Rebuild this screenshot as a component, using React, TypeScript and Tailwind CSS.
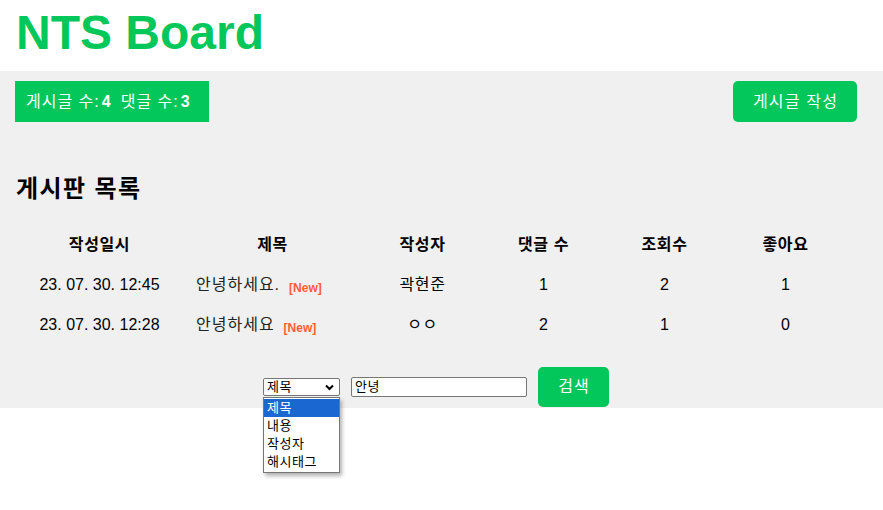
import React from "react";

const rows = [
  { date: "23. 07. 30. 12:45", title: "안녕하세요.", author: "곽현준", comments: 1, views: 2, likes: 1 },
  { date: "23. 07. 30. 12:28", title: "안녕하세요", author: "ㅇㅇ", comments: 2, views: 1, likes: 0 },
];

const headers = ["작성일시", "제목", "작성자", "댓글 수", "조회수", "좋아요"];

export default function App() {
  return (
    <div
      className="min-h-[510px] bg-white text-black"
      style={{ fontFamily: '"Liberation Sans", "Noto Sans CJK KR", Arial, sans-serif' }}
    >
      <h1 className="h-[71px] pl-4 pt-[5px] text-[48px] font-bold leading-[56px] text-[#03c75a]">
        NTS Board
      </h1>

      <div className="bg-[#f0f0f0] pb-px">
        <div className="flex items-start justify-between pl-[15px] pr-[26px] pt-[10px]">
          <div className="flex h-[41px] w-[194px] items-center bg-[#03c75a] pl-[11px] text-[16px] leading-5 text-white">
            <span className="tracking-[1px]">게시글 수:</span>
            <b className="ml-[2px]">4</b>
            <span className="ml-[10px] tracking-[1px]">댓글 수:</span>
            <b className="ml-[2px]">3</b>
          </div>
          <button className="h-[41px] w-[124px] rounded-[5px] bg-[#03c75a] pl-[1px] text-[16px] leading-5 tracking-[1.2px] text-white">
            게시글 작성
          </button>
        </div>

        <h2 className="ml-4 mt-[51px] text-[24px] font-bold leading-8 tracking-[1.4px]">게시판 목록</h2>

        <div className="ml-4 mt-5 grid grid-cols-[167px_179px_121px_121px_121px_121px] text-[16px]">
          {headers.map((h) => (
            <div key={h} className="flex h-10 items-center justify-center font-bold tracking-[0.6px]">
              {h}
            </div>
          ))}
          {rows.map((r) => (
            <React.Fragment key={r.date}>
              <div className="flex h-10 items-center justify-center">{r.date}</div>
              <div className="flex h-10 items-center pl-[13px] text-[#222]">
                <span className="tracking-[1px]">{r.title}</span>
                <span className="ml-[9px] mt-[5px] text-[12px] font-bold text-[#ff5c39]">[New]</span>
              </div>
              <div className="flex h-10 items-center justify-center tracking-[0.6px]">{r.author}</div>
              <div className="flex h-10 items-center justify-center">{r.comments}</div>
              <div className="flex h-10 items-center justify-center">{r.views}</div>
              <div className="flex h-10 items-center justify-center">{r.likes}</div>
            </React.Fragment>
          ))}
        </div>

        <div className="mt-[22px] flex items-center justify-center pr-[11px]">
          <div className="relative">
            <div className="flex h-[18px] w-[77px] items-center justify-between rounded-[2px] border border-[#767676] bg-white pl-[3px] pr-[5px] text-[13px] leading-4">
              <span className="tracking-[0.5px]">제목</span>
              <svg width="9" height="7" viewBox="0 0 9 7" aria-hidden="true">
                <path d="M1 1.5 L4.5 5 L8 1.5" fill="none" stroke="#000" strokeWidth="2" />
              </svg>
            </div>
            <div className="absolute left-0 top-[19px] z-10 w-[77px] border border-[#767676] bg-white py-px text-[13px] leading-[18px] tracking-[0.5px] shadow-[2px_3px_4px_rgba(0,0,0,0.3)]">
              <div className="bg-[#1a67d2] px-[3px] text-white">제목</div>
              <div className="px-[3px]">내용</div>
              <div className="px-[3px]">작성자</div>
              <div className="px-[3px]">해시태그</div>
            </div>
          </div>
          <div className="ml-[11px] flex h-5 w-[176px] items-center rounded-[2px] border border-[#767676] bg-white pl-[3px] text-[13px] leading-4 tracking-[0.5px]">
            안녕
          </div>
          <button className="ml-[11px] h-10 w-[71px] rounded-[5px] bg-[#03c75a] pl-[1px] text-[16px] leading-5 tracking-[1px] text-white">
            검색
          </button>
        </div>
      </div>
    </div>
  );
}
